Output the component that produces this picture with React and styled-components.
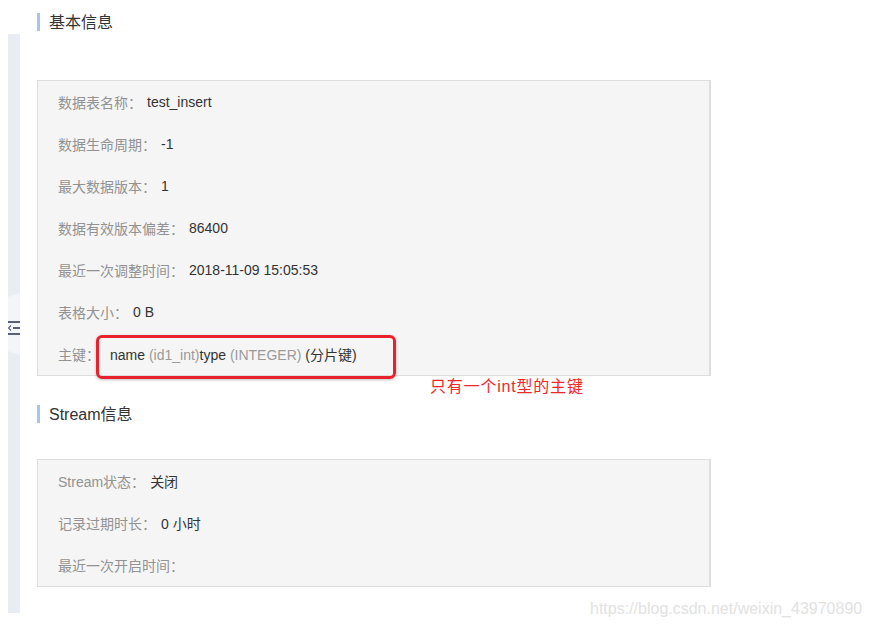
import React from 'react';
import styled, { createGlobalStyle } from 'styled-components';

const GlobalStyle = createGlobalStyle`
  body {
    margin: 0;
    background: #fff;
    font-family: 'Liberation Sans', 'Noto Sans CJK SC', sans-serif;
  }
`;

const Page = styled.div`
  position: relative;
  width: 871px;
  height: 628px;
  display: flex;
  overflow: hidden;
`;

const SideStrip = styled.div`
  margin: 34px 0 0 8px;
  width: 12px;
  height: 579px;
  background: #e9edf3;
  display: flex;
  align-items: center;
`;

const Main = styled.div`
  margin-left: 17px;
  width: 674px;
`;

const SectionTitle = styled.h3`
  margin: ${p => p.$top}px 0 0;
  border-left: 3px solid #a5c6e6;
  padding: 2px 0 0 9px;
  font-size: 16px;
  line-height: 16px;
  font-weight: normal;
  color: #333;
`;

const Card = styled.div`
  margin-top: ${p => p.$top}px;
  background: #f5f5f5;
  border: 1px solid #dedede;
  border-right-width: 2px;
`;

const Row = styled.div`
  height: 42px;
  display: flex;
  align-items: center;
  padding-left: 20px;
  font-size: 14px;
`;

const Label = styled.span`
  color: #929292;
`;

const Value = styled.span`
  position: relative;
  margin-left: ${p => p.$gap || 5}px;
  color: #333;
`;

const Muted = styled.span`
  color: #9a9a9a;
`;

const Highlight = styled.span`
  position: absolute;
  left: -14px;
  top: -9px;
  width: 300px;
  height: 44px;
  box-sizing: border-box;
  border: 3px solid #e8222c;
  border-radius: 6px;
  box-shadow: 0 1px 3px rgba(0, 0, 0, 0.25);
`;

const Note = styled.span`
  position: absolute;
  left: 430px;
  top: 377px;
  font-size: 16px;
  line-height: 20px;
  letter-spacing: 0.8px;
  color: #f2262a;
`;

const Watermark = styled.span`
  position: absolute;
  left: 590px;
  top: 600px;
  font-size: 16px;
  line-height: 18px;
  color: #e2e2e2;
`;

function TabIcon() {
  return (
    <svg width="12" height="62" viewBox="0 0 12 62">
      <path d="M0 4 L12 0 L12 62 L0 58 Z" fill="#f4f5f8" />
      <rect x="0" y="28" width="12" height="2" fill="#566176" />
      <rect x="0" y="40" width="12" height="2" fill="#566176" />
      <rect x="5" y="34" width="7" height="2" fill="#566176" />
      <path d="M3 32.5 L0.5 35 L3 37.5" stroke="#566176" strokeWidth="1.2" fill="none" />
    </svg>
  );
}

const baseRows = [
  ['数据表名称：', 'test_insert'],
  ['数据生命周期：', '-1'],
  ['最大数据版本：', '1'],
  ['数据有效版本偏差：', '86400'],
  ['最近一次调整时间：', '2018-11-09 15:05:53'],
  ['表格大小：', '0 B']
];

const streamRows = [
  ['Stream状态：', '关闭'],
  ['记录过期时长：', '0 小时'],
  ['最近一次开启时间：', '']
];

export default function App() {
  return (
    <Page>
      <GlobalStyle />
      <SideStrip>
        <TabIcon />
      </SideStrip>
      <Main>
        <SectionTitle $top={13}>基本信息</SectionTitle>
        <Card $top={49}>
          {baseRows.map(([label, value]) => (
            <Row key={label}>
              <Label>{label}</Label>
              <Value>{value}</Value>
            </Row>
          ))}
          <Row>
            <Label>主键：</Label>
            <Value $gap={10}>
              <Highlight />
              name <Muted>(id1_int)</Muted>type <Muted>(INTEGER)</Muted> (分片键)
            </Value>
          </Row>
        </Card>
        <SectionTitle $top={29}>Stream信息</SectionTitle>
        <Card $top={36}>
          {streamRows.map(([label, value]) => (
            <Row key={label}>
              <Label>{label}</Label>
              <Value>{value}</Value>
            </Row>
          ))}
        </Card>
      </Main>
      <Note>只有一个int型的主键</Note>
      <Watermark>https://blog.csdn.net/weixin_43970890</Watermark>
    </Page>
  );
}
